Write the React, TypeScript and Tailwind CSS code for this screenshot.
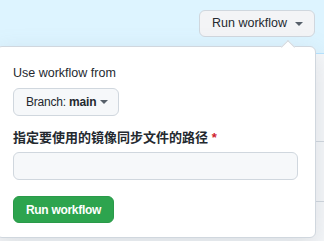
// small solid caret used by GitHub-style dropdown buttons
const Caret = () => (
    <svg width="8" height="4" viewBox="0 0 8 4" className="shrink-0" aria-hidden="true">
        <path d="M0 0h8L4 4z" fill="#57606a" />
    </svg>
);

const font = "font-['Segoe_UI','Liberation_Sans','Noto_Sans_CJK_SC',sans-serif]";

export default function App() {
    return (
        <div className={`relative w-[324px] h-[241px] overflow-hidden bg-[#f6f8fa] text-[#24292f] ${font}`}>
            {/* page behind the popup */}
            <div className="h-[54px] bg-[#ddf4ff] border-b border-[#b6e3ff] flex justify-end items-start pt-[10px] pr-[9px]">
                <button className="w-[116px] h-[27px] pl-[12px] pr-[11px] flex items-center justify-between rounded-md border border-[#d0d7de] bg-[#f3f4f6] text-[12.5px]">
                    Run workflow <Caret />
                </button>
            </div>
            <div className="h-[88px] border-b border-[#d0d7de]" />
            <div className="h-[60px] border-b border-[#d0d7de]" />

            {/* dispatch popup */}
            <div className="absolute left-[-4px] top-[46px] w-[320px] bg-white border border-[#d0d7de] rounded-md shadow-[0_8px_24px_rgba(140,149,159,0.25)] pt-[17px] pb-[14px] pl-[16px] pr-[17px] flex flex-col items-start">
                <div className="absolute top-[-5px] left-[286px] w-[10px] h-[10px] rotate-45 bg-white border-l border-t border-[#d0d7de]" />

                <div className="text-[12.5px] leading-[18px]">Use workflow from</div>

                <button className="mt-[6px] w-[106px] h-[28px] pl-[12px] pr-[10px] flex items-center justify-between rounded-md border border-[#d0d7de] bg-[#f6f8fa] text-[12px] tracking-[-0.2px]">
                    <span>
                        Branch: <span className="font-semibold">main</span>
                    </span>
                    <Caret />
                </button>

                <label className="mt-[12px] text-[13px] leading-[20px] font-bold">
                    指定要使用的镜像同步文件的路径 <span className="text-[#cf222e]">*</span>
                </label>
                <input className="mt-[4px] w-full h-[28px] rounded-md border border-[#d0d7de] bg-[#f6f8fa] outline-none" />

                <button className="mt-[16px] w-[101px] h-[27px] flex items-center justify-center rounded-md bg-[#2da44e] border border-[#2a9a49] text-white text-[12px] font-bold tracking-[-0.3px]">
                    Run workflow
                </button>
            </div>
        </div>
    );
}
